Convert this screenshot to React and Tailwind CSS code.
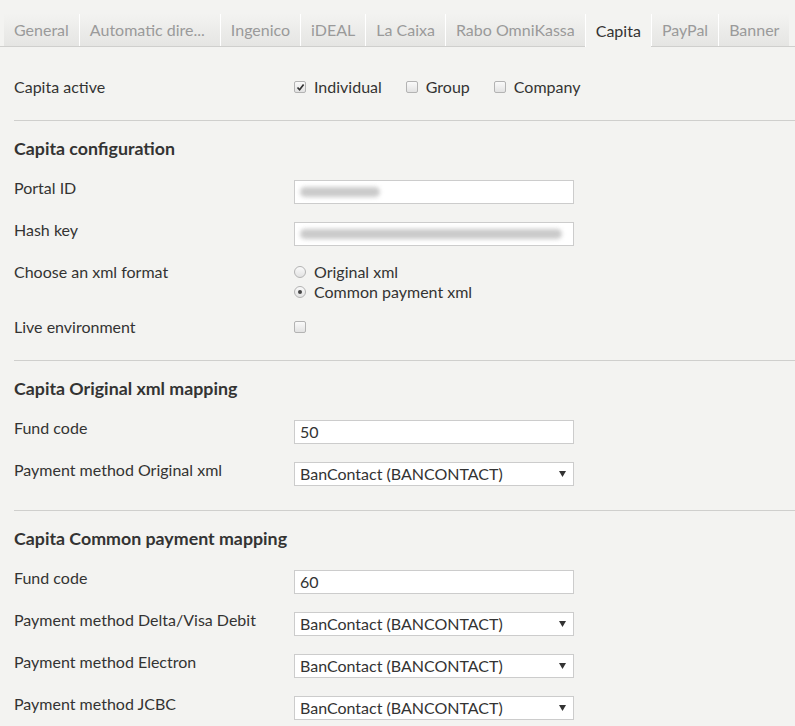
import React from 'react';

const tabs = ['General', 'Automatic dire...', 'Ingenico', 'iDEAL', 'La Caixa', 'Rabo OmniKassa', 'Capita', 'PayPal', 'Banner'];

function Box({ checked }) {
  return (
    <span className="w-[12px] h-[12px] border border-[#b3b3b3] rounded-[2px] bg-gradient-to-b from-[#fafafa] to-[#e2e2e2] flex items-center justify-center shrink-0">
      {checked && (
        <svg width="9" height="9" viewBox="0 0 9 9">
          <path d="M1.5 4.5 L3.6 6.8 L7.6 1.6" fill="none" stroke="#333" strokeWidth="1.7" />
        </svg>
      )}
    </span>
  );
}

function Radio({ checked }) {
  return (
    <span className="w-[12px] h-[12px] border border-[#b3b3b3] rounded-full bg-gradient-to-b from-[#fafafa] to-[#e2e2e2] flex items-center justify-center shrink-0">
      {checked && <span className="w-[4px] h-[4px] rounded-full bg-[#444]" />}
    </span>
  );
}

function Row({ label, children, className = '' }) {
  return (
    <div className={`flex items-start ${className}`}>
      <div className="w-[280px] leading-[16px]">{label}</div>
      {children}
    </div>
  );
}

function Input({ value, blur }) {
  return (
    <div className="w-[280px] h-[24px] bg-white border border-[#cccccc] flex items-center px-[5px]">
      {blur ? (
        <div className={`h-[10px] rounded-full bg-[#bdbdbd] blur-[2px] opacity-80 ${blur}`} />
      ) : (
        <span className="leading-[18px]">{value}</span>
      )}
    </div>
  );
}

function Select() {
  return (
    <div className="w-[280px] h-[24px] bg-white border border-[#cccccc] flex items-center justify-between pl-[5px] pr-[7px]">
      <span className="leading-[18px] -mt-[1px]">BanContact (BANCONTACT)</span>
      <svg width="7" height="6" viewBox="0 0 7 6">
        <path d="M0 0 H7 L3.5 6 Z" fill="#333" />
      </svg>
    </div>
  );
}

function Heading({ children }) {
  return <h2 className="mt-[15px] h-[24px] leading-[24px] text-[17.8px] font-bold">{children}</h2>;
}

export default function App() {
  return (
    <div className="min-h-screen bg-[#f3f3f1] text-[#333] text-[16px]" style={{ fontFamily: 'Lato, "Open Sans", sans-serif' }}>
      <div className="pt-[14px] pl-[4px] flex border-b border-[#cfcfcd] h-[47px]">
        {tabs.map((t, i) => {
          const active = t === 'Capita';
          return (
            <div
              key={t}
              className={
                active
                  ? 'h-[33px] px-[10px] flex items-center text-[#333] bg-[#f3f3f1] border-l border-white'
                  : 'h-[32px] px-[10px] flex items-center text-[#9a9a9a] bg-gradient-to-b from-[#f3f3f1] to-[#e5e5e3] border-l border-white' + (i === 0 ? ' border-l-0' : '')
              }
            >
              {i === 1 ? <span className="block w-[120px] whitespace-nowrap">{t}</span> : t}
            </div>
          );
        })}
      </div>

      <div className="pl-[14px]">
        <div className="mt-[28px] h-[24px] flex items-center">
          <div className="w-[280px]">Capita active</div>
          <div className="flex items-center">
            <Box checked />
            <span className="ml-[8px] mr-[24px]">Individual</span>
            <Box />
            <span className="ml-[8px] mr-[24px]">Group</span>
            <Box />
            <span className="ml-[8px]">Company</span>
          </div>
        </div>

        <div className="mt-[21px] border-t border-[#cfcfcd]" />
        <Heading>Capita configuration</Heading>
        <Row label="Portal ID" className="mt-[20px]">
          <Input blur="w-[80px]" />
        </Row>
        <Row label="Hash key" className="mt-[18px]">
          <Input blur="w-[262px]" />
        </Row>
        <div className="flex mt-[16px]">
          <div className="w-[280px] leading-[20px]">Choose an xml format</div>
          <div className="flex flex-col">
            <div className="flex items-center h-[20px]">
              <Radio />
              <span className="ml-[8px]">Original xml</span>
            </div>
            <div className="flex items-center h-[20px]">
              <Radio checked />
              <span className="ml-[8px]">Common payment xml</span>
            </div>
          </div>
        </div>
        <div className="flex items-center h-[18px] mt-[16px]">
          <div className="w-[280px]">Live environment</div>
          <Box />
        </div>

        <div className="mt-[24px] border-t border-[#cfcfcd]" />
        <Heading>Capita Original xml mapping</Heading>
        <Row label="Fund code" className="mt-[20px]">
          <Input value="50" />
        </Row>
        <Row label="Payment method Original xml" className="mt-[18px]">
          <Select />
        </Row>

        <div className="mt-[24px] border-t border-[#cfcfcd]" />
        <Heading>Capita Common payment mapping</Heading>
        <Row label="Fund code" className="mt-[20px]">
          <Input value="60" />
        </Row>
        <Row label="Payment method Delta/Visa Debit" className="mt-[18px]">
          <Select />
        </Row>
        <Row label="Payment method Electron" className="mt-[18px]">
          <Select />
        </Row>
        <Row label="Payment method JCBC" className="mt-[18px]">
          <Select />
        </Row>
      </div>
    </div>
  );
}
